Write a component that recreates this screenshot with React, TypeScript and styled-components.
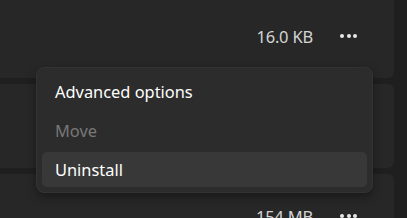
import React from "react";
import styled, { createGlobalStyle } from "styled-components";

const Global = createGlobalStyle`
  html, body { margin: 0; padding: 0; background: #1f1f1f; }
  body { font-family: "Noto Sans", "Open Sans", sans-serif; overflow: hidden; }
`;

const Page = styled.div`
  position: relative;
  width: 407px;
  height: 218px;
  overflow: hidden;
  background: #1f1f1f;
`;

const List = styled.div`
  display: flex;
  flex-direction: column;
  gap: 6px;
  margin: -6px 13px 0 -10px;
`;

const Card = styled.div`
  height: 84px;
  background: #272727;
  border-radius: 0 6px 6px 0;
  display: flex;
  align-items: center;
  justify-content: flex-end;
  padding-right: 37px;
  gap: 27px;
  box-sizing: border-box;
`;

const Size = styled.span`
  font-size: 16.5px;
  color: #d4d4d4;
  letter-spacing: -0.2px;
`;

const More = styled.button`
  width: 17px;
  height: 6px;
  padding: 0;
  border: none;
  background: transparent;
  display: flex;
  justify-content: space-between;
  align-items: center;
  span {
    width: 4px;
    height: 4px;
    border-radius: 50%;
    background: #e8e8e8;
  }
`;

const Menu = styled.div`
  position: absolute;
  left: 36px;
  top: 67px;
  width: 337px;
  box-sizing: border-box;
  padding: 6px 5px 5px;
  background: #2c2c2c;
  border: 1px solid #333;
  border-radius: 8px;
  box-shadow: 0 4px 10px rgba(0, 0, 0, 0.35);
  display: flex;
  flex-direction: column;
  gap: 4px;
`;

const Item = styled.div<{ $disabled?: boolean; $active?: boolean }>`
  height: 35px;
  display: flex;
  align-items: center;
  padding-left: 13px;
  border-radius: 5px;
  font-size: 16.4px;
  color: ${(p) => (p.$disabled ? "#787878" : "#ffffff")};
  background: ${(p) => (p.$active ? "#383838" : "transparent")};
`;

const rows = ["16.0 KB", "", "154 MB"];

export default function App() {
  return (
    <Page>
      <Global />
      <List>
        {rows.map((s, i) => (
          <Card key={i}>
            {s && <Size>{s}</Size>}
            {s && (
              <More aria-label="More options">
                <span />
                <span />
                <span />
              </More>
            )}
          </Card>
        ))}
      </List>
      <Menu role="menu">
        <Item role="menuitem">Advanced options</Item>
        <Item role="menuitem" $disabled>Move</Item>
        <Item role="menuitem" $active>Uninstall</Item>
      </Menu>
    </Page>
  );
}
